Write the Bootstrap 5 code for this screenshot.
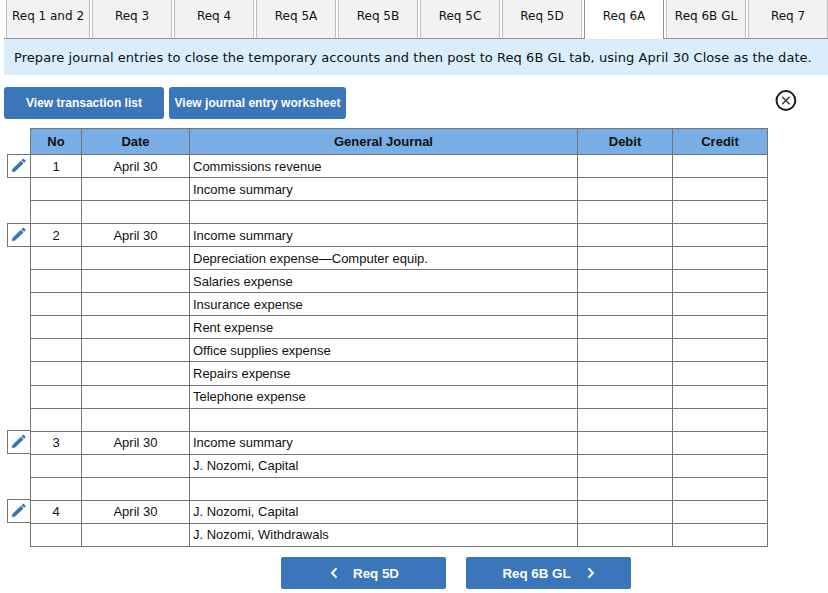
<!DOCTYPE html>
<html lang="en">
<head>
<meta charset="utf-8">
<meta name="viewport" content="width=device-width, initial-scale=1">
<title>Closing entries</title>
<link href="https://cdn.jsdelivr.net/npm/bootstrap@5.3.0/dist/css/bootstrap.min.css" rel="stylesheet">
<style>
body{font-family:"Liberation Sans",Arial,sans-serif;font-size:13px;line-height:16px;color:#111;background:#fff;overflow:hidden;height:593px}
.req-tabs{height:39px;gap:2px;border-bottom:1px solid #909297;margin-left:4px;padding-left:2px;font:12px/16px "DejaVu Sans",Verdana,sans-serif}
.req-tabs .nav-link{flex:none;width:80px;height:38px;padding:8px 0 0;text-align:center;white-space:nowrap;color:#111;background:#f2f2f2;border:solid #bdbec2;border-width:0 1px;border-radius:0}
.req-tabs .nav-link.first{width:84px}
.req-tabs .nav-link.active{height:39px;background:#fff;color:#111;border-color:#909297}
.prompt{height:36px;margin-left:4px;padding:11px 0 0 10px;background:#d9edfb;font:13px/16px "DejaVu Sans",Verdana,sans-serif;letter-spacing:.052px;white-space:nowrap}
.tools{height:53px;padding:12px 31px 0 4px;gap:5px}
.tools .btn-flat{width:160px}
.tools .btn-flat.wide{width:177px}
.btn-flat{background:#3a76b9;color:#fff;font-weight:700;height:32px;padding:0;border:0;white-space:nowrap;border-radius:3px;font-size:12px;line-height:32px}
.btn-flat:hover{background:#2f659f;color:#fff}
.close-round{width:22px;height:22px;margin-top:2px}
.close-round svg,.edit-box svg{display:block}
.edit-rail{width:23px;margin-left:7px}
.edit-box{width:23px;height:24px;border:1px solid #747474;border-right:0;padding:0 0 1px 3px;background:#fff;border-radius:0}
.edit-1{margin-top:26px}
.edit-2,.edit-4{margin-top:45px}
.edit-3{margin-top:183px}
.journal{width:738px;table-layout:fixed;border-collapse:separate;border-spacing:0;border:solid #747474;border-width:1px 0 0 1px;line-height:16px}
.journal th,.journal td{border:solid #747474;border-width:0 1px 1px 0;white-space:nowrap}
.journal th{background:#79ade5;color:#111;text-align:center;height:26px;padding:0}
.journal td{height:23px;padding:1px 3px 0;line-height:15px;vertical-align:middle}
.journal .tall td{height:24px;padding-bottom:1px}
.journal .tall ~ tr td{padding:0 3px 1px}
.journal td:nth-child(-n+2){text-align:center}
.col-no{width:51px}.col-date{width:108px}.col-acct{width:388px}.col-amt{width:95px}
.pager{margin:10px 0 0 281px;gap:20px}
.pager .btn-flat{width:165px;font-size:13.33px;border-radius:2px;gap:15px;padding-left:2px}
.pager .btn-flat.next{gap:16px;padding-left:0}
.pager span{padding-top:1px}
</style>
</head>
<body>
<nav class="nav req-tabs flex-nowrap">
<a class="nav-link first" href="#">Req 1 and 2</a><a class="nav-link" href="#">Req 3</a><a class="nav-link" href="#">Req 4</a><a class="nav-link" href="#">Req 5A</a><a class="nav-link" href="#">Req 5B</a><a class="nav-link" href="#">Req 5C</a><a class="nav-link" href="#">Req 5D</a><a class="nav-link active" href="#">Req 6A</a><a class="nav-link" href="#">Req 6B GL</a><a class="nav-link" href="#">Req 7</a>
</nav>
<div class="prompt">Prepare journal entries to close the temporary accounts and then post to Req 6B GL tab, using April 30 Close as the date.</div>
<div class="tools d-flex align-items-start">
<button class="btn btn-flat">View transaction list</button>
<button class="btn btn-flat wide">View journal entry worksheet</button>
<button class="btn p-0 border-0 ms-auto close-round" aria-label="Close"><svg width="22" height="22" viewBox="0 0 22 22" fill="none"><circle cx="10.900" cy="11.500" r="9.400" stroke="#1b1b1b" stroke-width="2"/><path d="M7.200 7.800l7.400 7.400M14.600 7.800l-7.400 7.400" stroke="#333" stroke-width="1.400"/></svg></button>
</div>
<svg class="d-none"><symbol id="pencil" viewBox="0 0 15 15"><path d="M1.100 13.800L1.400 11.200L9.800 3L12.300 5.400L3.900 13.500ZM10.600 2.200L11.900 1Q12.300 .8 12.700 1.100L14.200 2.500Q14.600 2.900 14.300 3.400L13 4.600Z" fill="#3a72b4" stroke="#3a72b4" stroke-width=".4"/></symbol></svg>
<main class="d-flex align-items-start">
<div class="edit-rail d-flex flex-column">
<button class="edit-box edit-1" aria-label="Edit entry 1"><svg width="15" height="15"><use href="#pencil"/></svg></button>
<button class="edit-box edit-2" aria-label="Edit entry 2"><svg width="15" height="15"><use href="#pencil"/></svg></button>
<button class="edit-box edit-3" aria-label="Edit entry 3"><svg width="15" height="15"><use href="#pencil"/></svg></button>
<button class="edit-box edit-4" aria-label="Edit entry 4"><svg width="15" height="15"><use href="#pencil"/></svg></button>
</div>
<table class="journal">
<colgroup><col class="col-no"><col class="col-date"><col class="col-acct"><col class="col-amt"><col class="col-amt"></colgroup>
<thead><tr><th>No</th><th>Date</th><th>General Journal</th><th>Debit</th><th>Credit</th></tr></thead>
<tbody>
<tr><td>1</td><td>April 30</td><td>Commissions revenue</td><td></td><td></td></tr>
<tr><td></td><td></td><td>Income summary</td><td></td><td></td></tr>
<tr><td></td><td></td><td></td><td></td><td></td></tr>
<tr><td>2</td><td>April 30</td><td>Income summary</td><td></td><td></td></tr>
<tr><td></td><td></td><td>Depreciation expense—Computer equip.</td><td></td><td></td></tr>
<tr><td></td><td></td><td>Salaries expense</td><td></td><td></td></tr>
<tr><td></td><td></td><td>Insurance expense</td><td></td><td></td></tr>
<tr><td></td><td></td><td>Rent expense</td><td></td><td></td></tr>
<tr><td></td><td></td><td>Office supplies expense</td><td></td><td></td></tr>
<tr class="tall"><td></td><td></td><td>Repairs expense</td><td></td><td></td></tr>
<tr><td></td><td></td><td>Telephone expense</td><td></td><td></td></tr>
<tr><td></td><td></td><td></td><td></td><td></td></tr>
<tr><td>3</td><td>April 30</td><td>Income summary</td><td></td><td></td></tr>
<tr><td></td><td></td><td>J. Nozomi, Capital</td><td></td><td></td></tr>
<tr><td></td><td></td><td></td><td></td><td></td></tr>
<tr><td>4</td><td>April 30</td><td>J. Nozomi, Capital</td><td></td><td></td></tr>
<tr><td></td><td></td><td>J. Nozomi, Withdrawals</td><td></td><td></td></tr>
</tbody>
</table>
</main>
<div class="pager d-flex">
<button class="btn btn-flat d-flex align-items-center justify-content-center"><svg width="8" height="12" viewBox="0 0 8 12"><path d="M6.500 1.300L2 6L6.500 10.700" fill="none" stroke="#fff" stroke-width="2"/></svg><span>Req 5D</span></button>
<button class="btn btn-flat next d-flex align-items-center justify-content-center"><span>Req 6B GL</span><svg width="8" height="12" viewBox="0 0 8 12"><path d="M1.500 1.300L6 6L1.500 10.700" fill="none" stroke="#fff" stroke-width="2"/></svg></button>
</div>
<script src="https://cdn.jsdelivr.net/npm/bootstrap@5.3.0/dist/js/bootstrap.bundle.min.js"></script>
</body>
</html>
